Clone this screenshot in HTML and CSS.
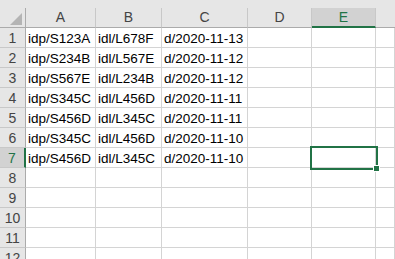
FILE: index.html
```html
<!DOCTYPE html>
<html lang="en">
<head>
    <meta charset="UTF-8">
    <meta name="viewport" content="width=device-width, initial-scale=1.0">
    <title>Book1 - Excel</title>
    <link rel="stylesheet" href="styles.css">
</head>
<body>

    <div class="toolbar-edge"></div>

    <div class="sheet">
        <!-- column headers -->
        <div class="corner"><span class="corner-tri"></span></div>
        <div class="col-head">A</div>
        <div class="col-head">B</div>
        <div class="col-head">C</div>
        <div class="col-head">D</div>
        <div class="col-head selected">E</div>
        <div class="col-head last"></div>

        <div class="row-head">1</div>
        <div class="cell">idp/S123A</div>
        <div class="cell">idl/L678F</div>
        <div class="cell">d/2020-11-13</div>
        <div class="cell"></div>
        <div class="cell"></div>
        <div class="cell"></div>

        <div class="row-head">2</div>
        <div class="cell">idp/S234B</div>
        <div class="cell">idl/L567E</div>
        <div class="cell">d/2020-11-12</div>
        <div class="cell"></div>
        <div class="cell"></div>
        <div class="cell"></div>

        <div class="row-head">3</div>
        <div class="cell">idp/S567E</div>
        <div class="cell">idl/L234B</div>
        <div class="cell">d/2020-11-12</div>
        <div class="cell"></div>
        <div class="cell"></div>
        <div class="cell"></div>

        <div class="row-head">4</div>
        <div class="cell">idp/S345C</div>
        <div class="cell">idl/L456D</div>
        <div class="cell">d/2020-11-11</div>
        <div class="cell"></div>
        <div class="cell"></div>
        <div class="cell"></div>

        <div class="row-head">5</div>
        <div class="cell">idp/S456D</div>
        <div class="cell">idl/L345C</div>
        <div class="cell">d/2020-11-11</div>
        <div class="cell"></div>
        <div class="cell"></div>
        <div class="cell"></div>

        <div class="row-head">6</div>
        <div class="cell">idp/S345C</div>
        <div class="cell">idl/L456D</div>
        <div class="cell">d/2020-11-10</div>
        <div class="cell"></div>
        <div class="cell"></div>
        <div class="cell"></div>

        <div class="row-head selected">7</div>
        <div class="cell">idp/S456D</div>
        <div class="cell">idl/L345C</div>
        <div class="cell">d/2020-11-10</div>
        <div class="cell"></div>
        <div class="cell active"><span class="sel-box"><span class="fill-handle"></span></span></div>
        <div class="cell"></div>

        <div class="row-head">8</div>
        <div class="cell"></div><div class="cell"></div><div class="cell"></div>
        <div class="cell"></div><div class="cell"></div><div class="cell"></div>

        <div class="row-head">9</div>
        <div class="cell"></div><div class="cell"></div><div class="cell"></div>
        <div class="cell"></div><div class="cell"></div><div class="cell"></div>

        <div class="row-head">10</div>
        <div class="cell"></div><div class="cell"></div><div class="cell"></div>
        <div class="cell"></div><div class="cell"></div><div class="cell"></div>

        <div class="row-head">11</div>
        <div class="cell"></div><div class="cell"></div><div class="cell"></div>
        <div class="cell"></div><div class="cell"></div><div class="cell"></div>

        <div class="row-head">12</div>
        <div class="cell"></div><div class="cell"></div><div class="cell"></div>
        <div class="cell"></div><div class="cell"></div><div class="cell"></div>
    </div>

</body>
</html>
```

FILE: styles.css
```css
body {
    margin: 0;
    background-color: #fff;
    font-family: 'Liberation Sans', Arial, sans-serif;
    font-size: 14px;
    color: #000;
    overflow: hidden;
}

.toolbar-edge {
    height: 8px;
    background-color: #e6e6e6;
}

.sheet {
    display: grid;
    grid-template-columns: 26px 70px 66px 86px 64px 64px 1fr;
    grid-auto-rows: 20px;
}

.sheet > div {
    box-sizing: border-box;
}

/* headers */
.corner {
    position: relative;
    background-color: #e6e6e6;
    border-right: 1px solid #ababab;
    border-bottom: 1px solid #ababab;
}

.corner-tri {
    position: absolute;
    right: 3px;
    bottom: 2px;
    width: 0;
    height: 0;
    border-left: 12px solid transparent;
    border-bottom: 12px solid #b4b4b4;
}

.col-head {
    background-color: #e6e6e6;
    border-right: 1px solid #c8c8c8;
    border-bottom: 1px solid #ababab;
    color: #444;
    text-align: center;
    line-height: 19px;
}

.col-head.selected {
    background-color: #d2d2d2;
    color: #217346;
    border-bottom: 2px solid #217346;
}

.col-head.last {
    border-right: none;
}

.row-head {
    background-color: #e6e6e6;
    border-right: 1px solid #ababab;
    border-bottom: 1px solid #c8c8c8;
    color: #444;
    text-align: center;
    line-height: 20px;
}

.row-head.selected {
    background-color: #d2d2d2;
    color: #217346;
    border-right: 2px solid #217346;
}

/* cells */
.cell {
    border-right: 1px solid #d4d4d4;
    border-bottom: 1px solid #d4d4d4;
    padding-left: 2px;
    font-size: 13.5px;
    line-height: 21px;
    white-space: nowrap;
}

.cell.active {
    position: relative;
}

.sel-box {
    position: absolute;
    left: -2px;
    top: -2px;
    width: 68px;
    height: 24px;
    box-sizing: border-box;
    border: 2px solid #217346;
}

.fill-handle {
    position: absolute;
    right: -4px;
    bottom: -4px;
    width: 5px;
    height: 5px;
    background-color: #217346;
    border: 1px solid #fff;
}
```
